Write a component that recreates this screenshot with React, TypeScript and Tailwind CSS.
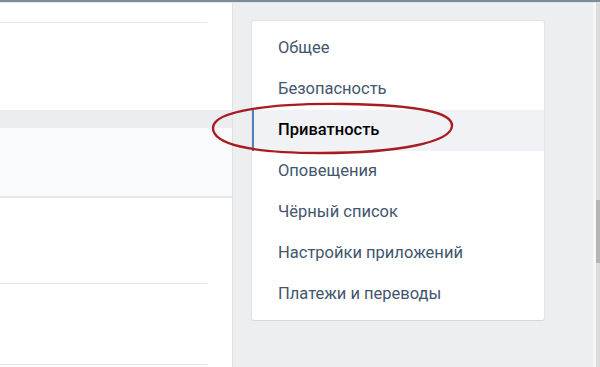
const items = [
  'Общее',
  'Безопасность',
  'Приватность',
  'Оповещения',
  'Чёрный список',
  'Настройки приложений',
  'Платежи и переводы',
];

const Line = () => <div className="w-[207px] h-px bg-[#e4e6ea]" />;

export default function App() {
  return (
    <div className="relative w-[600px] h-[367px] overflow-hidden flex flex-col bg-[#edeef0] font-['Roboto',sans-serif]">
      <div className="h-[2px] bg-[#7d8a97]" />
      <div className="h-px bg-[#dbe6ef]" />
      <div className="flex flex-1">
        {/* left content column */}
        <div className="w-[233px] flex flex-col bg-white border-r border-[#dfe1e5]">
          <div className="h-[19px]" />
          <Line />
          <div className="h-[87px]" />
          <div className="h-[18px] bg-[#ebedf0]" />
          <div className="h-[70px] bg-[#f9fafb] border-b-2 border-[#e7e8ec]" />
          <div className="h-[85px]" />
          <Line />
          <div className="h-[80px]" />
          <Line />
          <div className="flex-1" />
        </div>

        {/* settings menu */}
        <div className="flex-1 pl-[19px] pt-[18px]">
          <div className="w-[292px] bg-white rounded-[2px] shadow-[0_1px_0_0_#d7d8db,0_0_0_1px_#e3e4e8] pt-[7px] pb-[5px]">
            {items.map((item) => {
              const active = item === 'Приватность';
              return (
                <div
                  key={item}
                  className={
                    active
                      ? 'h-[41px] flex items-center pl-[24px] bg-[#f0f2f5] border-l-2 border-[#5181b8] text-black font-medium text-[16.5px]'
                      : 'h-[41px] flex items-center pl-[26px] text-[#42566d] text-[16.5px]'
                  }
                >
                  {item}
                </div>
              );
            })}
          </div>
        </div>

        {/* right scroll edge */}
        <div className="w-[7px] flex">
          <div className="w-[3px] bg-[#f7f7f7]" />
          <div className="flex-1 flex flex-col bg-[#dcdcdc]">
            <div className="h-[197px]" />
            <div className="h-[63px] bg-[#b5b5b5]" />
          </div>
        </div>
      </div>

      {/* red hand-drawn ellipse */}
      <svg className="absolute left-[205px] top-[98px]" width="260" height="64" viewBox="0 0 260 64">
        <path
          d="M 8 30 C 8 12, 70 5, 140 6 C 215 7, 248 15, 247 28 C 246 44, 195 55, 115 55 C 45 55, 8 46, 8 30 Z"
          fill="none"
          stroke="#a71d1f"
          strokeWidth="2.4"
        />
      </svg>
    </div>
  );
}
